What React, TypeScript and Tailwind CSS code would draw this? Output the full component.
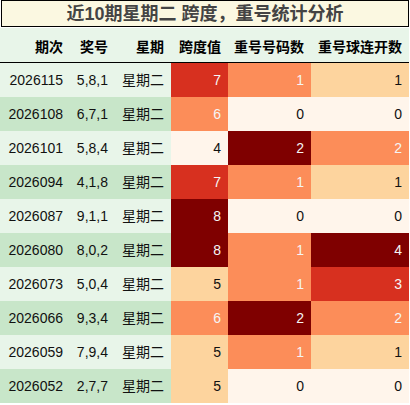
import React from 'react';

const ORRD: Record<string, string> = {
  a: 'bg-[#fff5eb] text-[#111]',
  b: 'bg-[#fdd49e] text-[#111]',
  c: 'bg-[#fc8d59] text-[#f5f5f5]',
  d: 'bg-[#d7301f] text-[#f5f5f5]',
  e: 'bg-[#7f0000] text-[#f5f5f5]',
};

const spanColor = (v: number) => (v >= 8 ? 'e' : v === 7 ? 'd' : v === 6 ? 'c' : v === 5 ? 'b' : 'a');
const repColor = (v: number) => (v >= 2 ? 'e' : v === 1 ? 'c' : 'a');
const runColor = (v: number) => (v >= 4 ? 'e' : v === 3 ? 'd' : v === 2 ? 'c' : v === 1 ? 'b' : 'a');

const rows = [
  { id: '2026115', nums: '5,8,1', span: 7, rep: 1, run: 1 },
  { id: '2026108', nums: '6,7,1', span: 6, rep: 0, run: 0 },
  { id: '2026101', nums: '5,8,4', span: 4, rep: 2, run: 2 },
  { id: '2026094', nums: '4,1,8', span: 7, rep: 1, run: 1 },
  { id: '2026087', nums: '9,1,1', span: 8, rep: 0, run: 0 },
  { id: '2026080', nums: '8,0,2', span: 8, rep: 1, run: 4 },
  { id: '2026073', nums: '5,0,4', span: 5, rep: 1, run: 3 },
  { id: '2026066', nums: '9,3,4', span: 6, rep: 2, run: 2 },
  { id: '2026059', nums: '7,9,4', span: 5, rep: 1, run: 1 },
  { id: '2026052', nums: '2,7,7', span: 5, rep: 0, run: 0 },
];

const cell = 'flex items-center justify-end pr-[7px] h-[34px]';

export default function App() {
  return (
    <div
      className="w-[410px] h-[405px] bg-white text-[14px] text-[#111]"
      style={{ fontFamily: '"Liberation Sans", "Noto Sans CJK SC", sans-serif' }}
    >
      <div className="ml-px w-[408px] h-[27px] border border-black bg-[#fbf8e1] flex items-center justify-center pt-[2px] text-[18px] font-bold text-[#444]">
        近10期星期二 跨度，重号统计分析
      </div>
      <div className="mt-px w-[409px] grid grid-cols-[70px_45px_56px_57px_83px_98px]">
        {['期次', '奖号', '星期', '跨度值', '重号号码数', '重号球连开数'].map((h) => (
          <div key={h} className={`${cell} bg-[#e8f5e9] font-bold text-black border-b border-black h-[35px] pt-[5px]`}>
            {h}
          </div>
        ))}
        {rows.map((r, i) => {
          const side = i % 2 === 0 ? 'bg-[#e8f5e9]' : 'bg-[#c8e6c9]';
          return (
            <React.Fragment key={r.id}>
              <div className={`${cell} ${side}`}>{r.id}</div>
              <div className={`${cell} ${side}`}>{r.nums}</div>
              <div className={`${cell} ${side}`}>星期二</div>
              <div className={`${cell} ${ORRD[spanColor(r.span)]}`}>{r.span}</div>
              <div className={`${cell} ${ORRD[repColor(r.rep)]}`}>{r.rep}</div>
              <div className={`${cell} ${ORRD[runColor(r.run)]}`}>{r.run}</div>
            </React.Fragment>
          );
        })}
      </div>
    </div>
  );
}
